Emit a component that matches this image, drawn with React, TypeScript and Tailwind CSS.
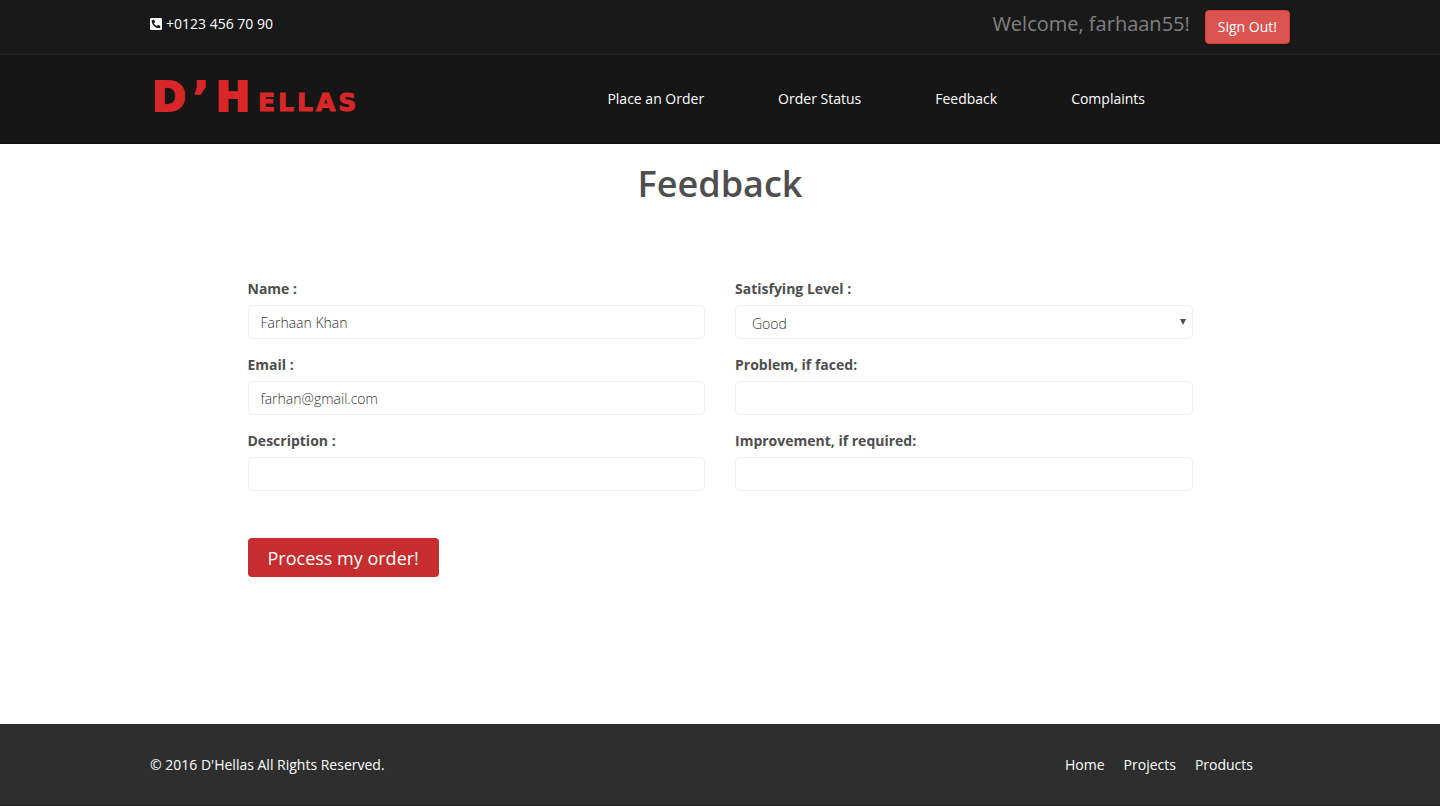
import { useState } from "react";
import type { InputHTMLAttributes } from "react";
import { FaPhoneSquareAlt } from "react-icons/fa";

const navLinks = ["Place an Order", "Order Status", "Feedback", "Complaints"];
const footerLinks = ["Home", "Projects", "Products"];

const labelClass = "mb-[6px] block leading-5 font-bold";
const controlClass =
  "block h-[34px] w-full rounded-[5px] border border-[#f0f0f0] bg-white px-3 text-[14px] leading-5 font-light text-[#333333] outline-none focus:border-[#c52d2f]";

type FieldProps = { id: string; label: string } & InputHTMLAttributes<HTMLInputElement>;

function Field({ id, label, ...input }: FieldProps) {
  return (
    <div>
      <label htmlFor={id} className={labelClass}>
        {label}
      </label>
      <input id={id} name={id} className={controlClass} {...input} />
    </div>
  );
}

function Logo() {
  return (
    <a
      href="#home"
      aria-label="D'Hellas"
      className="flex items-baseline pb-1 pl-[2px] font-['DejaVu_Sans',sans-serif] leading-none font-bold text-[#d92728]"
    >
      <span className="flex gap-[7px] text-[41px] leading-none [-webkit-text-stroke:2px_#d92728]">
        <span>D</span>
        <span>’</span>
        <span>H</span>
      </span>
      <span className="ml-2 flex gap-[3px] text-[25px] leading-none [-webkit-text-stroke:1px_#d92728]">
        <span>E</span>
        <span>L</span>
        <span>L</span>
        <span>A</span>
        <span>S</span>
      </span>
    </a>
  );
}

export default function App() {
  const [level, setLevel] = useState("Good");

  return (
    <div className="flex min-h-screen flex-col bg-white font-['Open_Sans',sans-serif] text-[14px] leading-[22px] text-[#4e4e4e]">
      <header className="border-b border-[#101010] bg-[#161616] text-white">
        <div className="border-b border-[#222222] bg-[#191919]">
          <div className="mx-auto flex max-w-[1170px] items-start justify-between px-[15px] py-[10px]">
            <p className="flex items-center gap-1 pt-[3px]">
              <FaPhoneSquareAlt className="h-[14px] w-3" />
              +0123 456 70 90
            </p>
            <div className="flex items-start gap-[15px]">
              <span className="text-[20px] leading-7 text-[#808080]">Welcome, farhaan55!</span>
              <button
                type="button"
                className="h-[34px] rounded-[4px] border border-[#d43f3a] bg-[#d9534f] px-3 leading-5"
              >
                Sign Out!
              </button>
            </div>
          </div>
        </div>
        <div className="mx-auto flex min-h-[88px] max-w-[1170px] items-center px-[15px]">
          <Logo />
          <nav className="mr-[145px] ml-auto flex gap-[74px]">
            {navLinks.map((link) => (
              <a key={link} href="#nav">
                {link}
              </a>
            ))}
          </nav>
        </div>
      </header>

      <main className="mx-auto w-full max-w-[975px] flex-1 px-[15px] pt-5">
        <h1 className="text-center text-[36px] leading-10 font-semibold">Feedback</h1>
        <form className="pt-[75px]" onSubmit={(event) => event.preventDefault()}>
          <div className="grid grid-cols-2 gap-x-[30px] gap-y-4">
            <Field id="name" label="Name :" type="text" defaultValue="Farhaan Khan" />
            <div>
              <label htmlFor="level" className={labelClass}>
                Satisfying Level :
              </label>
              <div className="relative">
                <select
                  id="level"
                  name="level"
                  value={level}
                  onChange={(event) => setLevel(event.target.value)}
                  className={`${controlClass} appearance-none pt-[3px] pl-4`}
                >
                  <option>Excellent</option>
                  <option>Good</option>
                  <option>Average</option>
                  <option>Poor</option>
                </select>
                <svg
                  viewBox="0 0 6 6"
                  aria-hidden="true"
                  className="pointer-events-none absolute top-[14px] right-[7px] size-[6px] fill-[#4e4e4e]"
                >
                  <path d="M0 0h6L3 6z" />
                </svg>
              </div>
            </div>
            <Field id="email" label="Email :" type="email" defaultValue="farhan@gmail.com" />
            <Field id="problem" label="Problem, if faced:" type="text" />
            <Field id="description" label="Description :" type="text" />
            <Field id="improvement" label="Improvement, if required:" type="text" />
          </div>
          <button
            type="submit"
            className="mt-[47px] mb-10 h-[39px] rounded-[4px] bg-[#c52d2f] px-5 text-[18px] leading-6 text-white"
          >
            Process my order!
          </button>
        </form>
      </main>

      <footer className="border-b border-[#222222] bg-[#2e2e2e] text-white">
        <div className="mx-auto flex max-w-[1170px] items-center justify-between px-[15px] pt-[30px] pb-[29px]">
          <p>© 2016 D'Hellas All Rights Reserved.</p>
          <nav className="mr-[37px] flex gap-[19px]">
            {footerLinks.map((link) => (
              <a key={link} href="#footer">
                {link}
              </a>
            ))}
          </nav>
        </div>
      </footer>
    </div>
  );
}
